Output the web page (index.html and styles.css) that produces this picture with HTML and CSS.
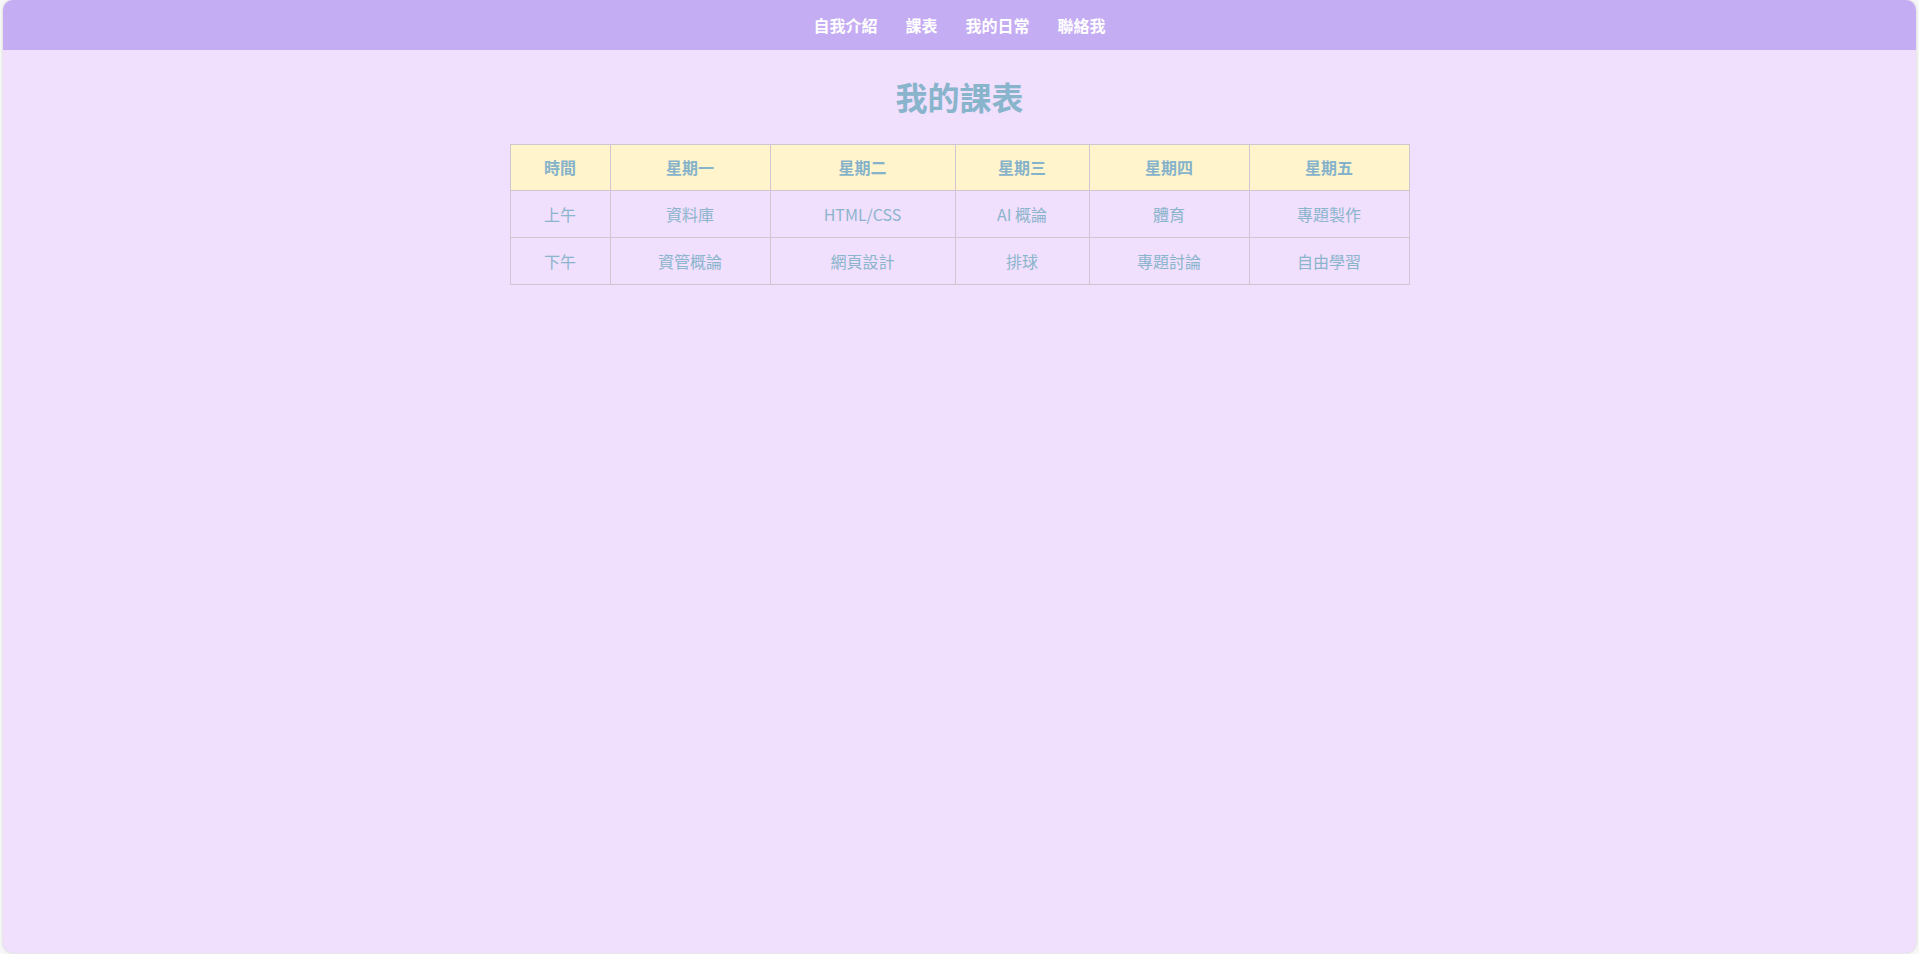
FILE: index.html
```html
<!DOCTYPE html>
<html lang="zh-Hant">
<head>
<meta charset="utf-8">
<title>我的課表</title>
<link rel="stylesheet" href="styles.css">
</head>
<body>
<div class="page">
  <nav class="nav">
    <a href="#">自我介紹</a>
    <a href="#">課表</a>
    <a href="#">我的日常</a>
    <a href="#">聯絡我</a>
  </nav>
  <main class="content">
    <h1 class="title">我的課表</h1>
    <table class="schedule">
      <colgroup>
        <col class="c-time">
        <col class="c-mon">
        <col class="c-tue">
        <col class="c-wed">
        <col class="c-thu">
        <col class="c-fri">
      </colgroup>
      <thead>
        <tr><th>時間</th><th>星期一</th><th>星期二</th><th>星期三</th><th>星期四</th><th>星期五</th></tr>
      </thead>
      <tbody>
        <tr><td>上午</td><td>資料庫</td><td>HTML/CSS</td><td>AI 概論</td><td>體育</td><td>專題製作</td></tr>
        <tr><td>下午</td><td>資管概論</td><td>網頁設計</td><td>排球</td><td>專題討論</td><td>自由學習</td></tr>
      </tbody>
    </table>
  </main>
</div>
</body>
</html>
```

FILE: styles.css
```css
html, body {
  margin: 0;
  padding: 0;
}
body {
  background: #f7f7f7;
  padding: 0 3px 1px 3px;
  font-family: "Noto Sans CJK TC", "Noto Sans", sans-serif;
}
.page {
  min-height: 953px;
  background: #f0dffd;
  border-radius: 10px;
  box-shadow: 0 0 3px rgba(0, 0, 0, 0.18);
  overflow: hidden;
}
.nav {
  height: 50px;
  background: #c5adf3;
  display: flex;
  justify-content: center;
  align-items: center;
  gap: 28px;
}
.nav a {
  color: #ffffff;
  text-decoration: none;
  font-weight: 700;
  font-size: 16px;
  line-height: 23px;
}
.content {
  display: flex;
  flex-direction: column;
  align-items: center;
}
.title {
  margin: 22px 0 24px 0;
  font-size: 32px;
  line-height: 48px;
  font-weight: 700;
  color: #88b4cc;
}
.schedule {
  width: 899px;
  border-collapse: collapse;
  table-layout: fixed;
  color: #8bb5cc;
  font-size: 16px;
}
.c-time { width: 100px; }
.c-mon { width: 160px; }
.c-tue { width: 185px; }
.c-wed { width: 134px; }
.c-thu { width: 160px; }
.c-fri { width: 160px; }
.schedule th,
.schedule td {
  border: 1px solid #cfc6cf;
  text-align: center;
  padding: 11px 0;
  line-height: 23px;
}
.schedule td {
  padding-top: 12px;
}
.schedule th {
  background: #fff4cc;
  font-weight: 700;
  color: #86b3cb;
}
.schedule td {
  font-weight: 400;
}
```
